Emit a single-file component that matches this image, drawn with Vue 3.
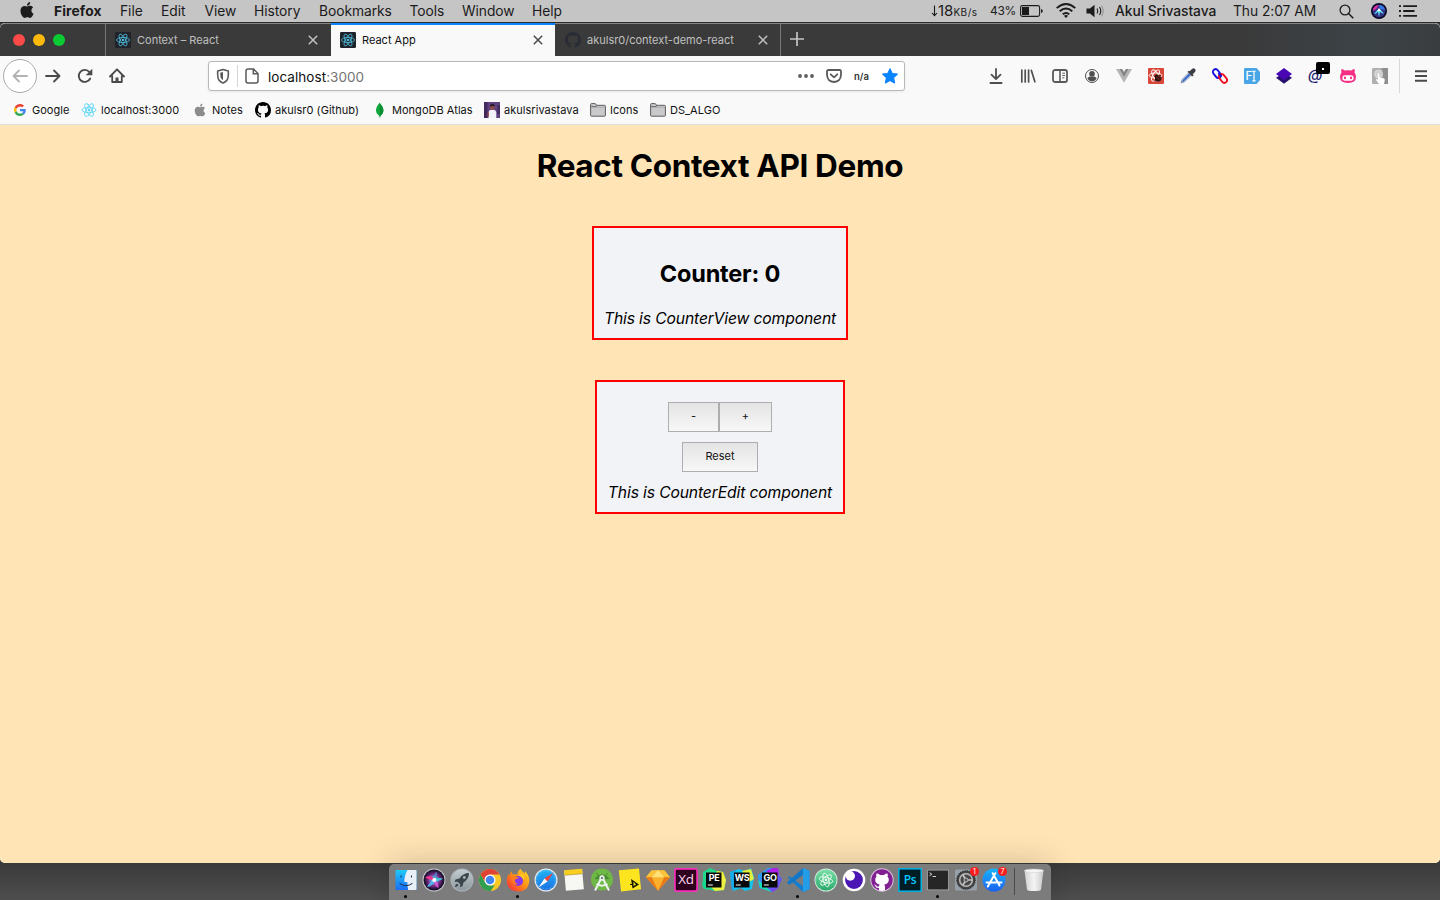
<script setup>
const menus = [
  { label: 'Firefox', width: 66 },
  { label: 'File', width: 41 },
  { label: 'Edit', width: 43.5 },
  { label: 'View', width: 49.5 },
  { label: 'History', width: 65 },
  { label: 'Bookmarks', width: 90.5 },
  { label: 'Tools', width: 52.5 },
  { label: 'Window', width: 70 },
  { label: 'Help', width: 40 }
]
const bookmarks = [
  { icon: 'google', label: 'Google', width: 37 },
  { icon: 'react-light', label: 'localhost:3000', width: 79 },
  { icon: 'apple-grey', label: 'Notes', width: 31 },
  { icon: 'github', label: 'akulsr0 (Github)', width: 85 },
  { icon: 'mongo', label: 'MongoDB Atlas', width: 80 },
  { icon: 'photo', label: 'akulsrivastava', width: 74 },
  { icon: 'folder', label: 'Icons', width: 28 },
  { icon: 'folder', label: 'DS_ALGO', width: 50 }
]
const tools = [
  { icon: 'download' }, { icon: 'library' }, { icon: 'sidebar' }, { icon: 'account' }, { icon: 'vue' },
  { icon: 'bee' }, { icon: 'dropper' }, { icon: 'link' }, { icon: 'font', glyph: 'F' }, { icon: 'layers' },
  { icon: 'at', glyph: '@', chip: true }, { icon: 'cat' }, { icon: 'touch' }
]
const dock = [
  { icon: 'finder', open: true }, { icon: 'siri' }, { icon: 'rocket' }, { icon: 'chrome' },
  { icon: 'firefox', open: true }, { icon: 'safari' }, { icon: 'notes' }, { icon: 'studio' },
  { icon: 'sticky' }, { icon: 'sketch' }, { icon: 'xd', glyph: 'Xd' }, { icon: 'pycharm', glyph: 'PE' },
  { icon: 'webstorm', glyph: 'WS' }, { icon: 'goland', glyph: 'GO' }, { icon: 'vscode', open: true },
  { icon: 'atom' }, { icon: 'insomnia' }, { icon: 'ghdesk' }, { icon: 'ps', glyph: 'Ps' },
  { icon: 'terminal', open: true }, { icon: 'prefs', badge: '1' }, { icon: 'appstore', badge: '7' }
]
</script>

<template>
  <svg class="defs" width="0" height="0">
    <defs>
      <linearGradient id="gFinder" x2="0" y2="1"><stop stop-color="#1fc8fb" /><stop offset="1" stop-color="#1b6ef3" /></linearGradient>
      <radialGradient id="gSiri"><stop stop-color="#fff" /><stop offset=".25" stop-color="#57b8e8" /><stop offset=".6" stop-color="#7a2a86" /><stop offset="1" stop-color="#15102c" /></radialGradient>
      <linearGradient id="gSilver" x2="0" y2="1"><stop stop-color="#c3cdd1" /><stop offset="1" stop-color="#8b979c" /></linearGradient>
      <linearGradient id="gFox" x1="1" x2="0" y2="1"><stop stop-color="#ffe226" /><stop offset=".5" stop-color="#ff8a16" /><stop offset="1" stop-color="#f5203f" /></linearGradient>
      <linearGradient id="gSafari" x2="0" y2="1"><stop stop-color="#1fb5f8" /><stop offset="1" stop-color="#1a6fe0" /></linearGradient>
      <linearGradient id="gAtom" x2="0" y2="1"><stop stop-color="#7ce0a8" /><stop offset="1" stop-color="#2aa96c" /></linearGradient>
      <linearGradient id="gStore" x2="0" y2="1"><stop stop-color="#19b4fb" /><stop offset="1" stop-color="#1b62f0" /></linearGradient>
      <linearGradient id="gTrash" x2="1"><stop stop-color="#d2d2d2" /><stop offset=".5" stop-color="#f4f4f4" /><stop offset="1" stop-color="#cacaca" /></linearGradient>
      <linearGradient id="gGo" x2="1" y2="1"><stop stop-color="#12b8f5" /><stop offset="1" stop-color="#8b2cf5" /></linearGradient>
    </defs>

    <symbol id="apple" viewBox="0 0 24 24"><path d="M12.152 6.896c-.948 0-2.415-1.078-3.96-1.04-2.04.027-3.91 1.183-4.961 3.014-2.117 3.675-.546 9.103 1.519 12.09 1.013 1.454 2.208 3.09 3.792 3.039 1.52-.065 2.09-.987 3.935-.987 1.831 0 2.35.987 3.96.948 1.637-.026 2.676-1.48 3.676-2.948 1.156-1.688 1.636-3.325 1.662-3.415-.039-.013-3.182-1.221-3.22-4.857-.026-3.04 2.48-4.494 2.597-4.559-1.429-2.09-3.623-2.324-4.39-2.376-2-.156-3.675 1.09-4.61 1.09zM15.53 3.83c.843-1.012 1.4-2.427 1.245-3.83-1.207.052-2.662.805-3.532 1.818-.78.896-1.454 2.338-1.273 3.714 1.338.104 2.715-.688 3.559-1.701" /></symbol>
    <symbol id="apple-grey" viewBox="0 0 16 16"><use href="#apple" x="1.5" y="1.5" width="13" height="13" fill="#8c8c8c" /></symbol>
    <symbol id="github" viewBox="0 0 16 16"><path d="M8 0C3.58 0 0 3.58 0 8c0 3.54 2.29 6.53 5.47 7.59.4.07.55-.17.55-.38 0-.19-.01-.82-.01-1.49-2.01.37-2.53-.49-2.69-.94-.09-.23-.48-.94-.82-1.13-.28-.15-.68-.52-.01-.53.63-.01 1.08.58 1.23.82.72 1.21 1.87.87 2.33.66.07-.52.28-.87.51-1.07-1.78-.2-3.64-.89-3.64-3.95 0-.87.31-1.59.82-2.15-.08-.2-.36-1.02.08-2.12 0 0 .67-.21 2.2.82.64-.18 1.32-.27 2-.27.68 0 1.36.09 2 .27 1.53-1.04 2.2-.82 2.2-.82.44 1.1.16 1.92.08 2.12.51.56.82 1.27.82 2.15 0 3.07-1.87 3.75-3.65 3.95.29.25.54.73.54 1.48 0 1.07-.01 1.93-.01 2.2 0 .21.15.46.55.38A8.013 8.013 0 0016 8c0-4.42-3.58-8-8-8z" /></symbol>
    <symbol id="atomic" viewBox="0 0 16 16"><g fill="none" stroke="currentColor" stroke-width=".9"><ellipse cx="8" cy="8" rx="7" ry="2.7" /><ellipse cx="8" cy="8" rx="7" ry="2.7" transform="rotate(60 8 8)" /><ellipse cx="8" cy="8" rx="7" ry="2.7" transform="rotate(120 8 8)" /></g><circle cx="8" cy="8" r="1.4" fill="currentColor" /></symbol>
    <symbol id="react-dark" viewBox="0 0 16 16"><rect width="16" height="16" rx="1.2" fill="#20232a" /><use href="#atomic" x=".5" y=".5" width="15" height="15" color="#4fb9d6" /></symbol>
    <symbol id="react-light" viewBox="0 0 16 16"><use href="#atomic" width="16" height="16" color="#61d9f5" /></symbol>
    <symbol id="google" viewBox="0 0 16 16"><g transform="translate(2 2) scale(.25)"><path fill="#ea4335" d="M24 9.5c3.54 0 6.71 1.22 9.21 3.6l6.85-6.85C35.9 2.38 30.47 0 24 0 14.62 0 6.51 5.38 2.56 13.22l7.98 6.19C12.43 13.72 17.74 9.5 24 9.5z" /><path fill="#4285f4" d="M46.98 24.55c0-1.57-.15-3.09-.38-4.55H24v9.02h12.94c-.58 2.96-2.26 5.48-4.78 7.18l7.73 6c4.51-4.18 7.09-10.36 7.09-17.65z" /><path fill="#fbbc05" d="M10.53 28.59c-.48-1.45-.76-2.99-.76-4.59s.27-3.14.76-4.59l-7.98-6.19C.92 16.46 0 20.12 0 24c0 3.88.92 7.54 2.56 10.78l7.97-6.19z" /><path fill="#34a853" d="M24 48c6.48 0 11.93-2.13 15.89-5.81l-7.73-6c-2.15 1.45-4.92 2.3-8.16 2.3-6.26 0-11.57-4.22-13.47-9.91l-7.98 6.19C6.51 42.62 14.62 48 24 48z" /></g></symbol>
    <symbol id="mongo" viewBox="0 0 16 16"><path d="M7.6.8C4.900 4 3.900 6 4 8.600c.1 2.400 1.600 4.200 3.300 5.200l.3 1.700h.5l.3-1.700c1.800-1.200 3-3 3-5.500C11.400 5.600 9.600 3.500 7.600.8z" fill="#12a83c" /><path d="M7.700 1v14.400h.4l.3-1.700c1.800-1.200 3-3 3-5.500C11.400 5.600 9.600 3.500 7.700 1z" fill="#0c8f33" /></symbol>
    <symbol id="photo" viewBox="0 0 16 16"><rect width="16" height="16" fill="#5d427f" /><path d="M0 0h3.500v16H0zM13.500 3H16v9h-2.500z" fill="#422a5c" /><path d="M4.500 16V10.500q.3-2.500 2.500-2.700h2.500q2.500.2 2.800 2.700V16z" fill="#f2f2f7" /><circle cx="8.200" cy="5.200" r="2.500" fill="#8b4a4c" /><path d="M5.700 4.500Q6 1.700 8.500 1.900q2.400.2 2.100 2.600-1.200-1.200-4.900 0z" fill="#251522" /><path d="M3.500 11l1.500-1v4l-1.500 1z" fill="#9a5148" /></symbol>
    <symbol id="folder" viewBox="0 0 16 16"><path d="M.6 13.300V2.600q0-1 .8-1h3.500q.8 0 1.200 1l.3.700h8.100q.9 0 .9.900v9.100q0 .9-.9.900H1.500q-.9 0-.9-.9z" fill="#c9c9cb" stroke="#5c5c5e" stroke-width="1" /><path d="M1.200 4.600h5l.7-1.200" stroke="#5c5c5e" fill="none" stroke-width=".9" /><path d="M1.200 5.200h13.600" stroke="#9a9a9c" stroke-width=".6" /></symbol>

    <symbol id="download" viewBox="0 0 16 16"><path d="M8 1v10M3.500 6.700 8 11.200l4.500-4.500M2.400 15h11.200" fill="none" stroke="#4f4f50" stroke-width="1.800" stroke-linecap="round" stroke-linejoin="round" /></symbol>
    <symbol id="library" viewBox="0 0 16 16"><path d="M1.800 2v12M5.200 2v12M8.600 2v12M11.300 2.300l3.600 11.500" fill="none" stroke="#4f4f50" stroke-width="1.700" stroke-linecap="round" /></symbol>
    <symbol id="sidebar" viewBox="0 0 16 16"><rect x="1" y="2" width="14" height="12" rx="2" fill="none" stroke="#5a5a5b" stroke-width="1.800" /><path d="M8 2v12" stroke="#5a5a5b" stroke-width="1.600" /><path d="M10.300 5.200h2.700M10.300 7.500h2.700M10.300 9.800h2" stroke="#5a5a5b" /></symbol>
    <symbol id="account" viewBox="0 0 16 16"><circle cx="8" cy="8" r="6.500" fill="none" stroke="#4f4f50" stroke-width="1" /><circle cx="8" cy="5.900" r="2.800" fill="#4f4f50" /><path d="M3.300 10.200Q5 8.200 6 8.500q2 1.200 4 0 1.200-.1 2.700 1.700-1.500 3.100-4.700 3.100t-4.700-3.100z" fill="#4f4f50" /></symbol>
    <symbol id="vue" viewBox="0 0 16 16"><path d="M0 1h3.300L8 9l4.700-8H16L8 14.700z" fill="#b5b5b5" /><path d="M3.300 1h2.900L8 4l1.800-3h2.900L8 9.200z" fill="#858585" /></symbol>
    <symbol id="bee" viewBox="0 0 16 16"><rect width="16" height="16" rx="1" fill="#d8483a" /><g fill="none" stroke="#fff" stroke-width=".9"><ellipse cx="7.500" cy="7.500" rx="6.300" ry="2.600" /><ellipse cx="7.500" cy="7.500" rx="6.300" ry="2.600" transform="rotate(60 7.500 7.500)" /><ellipse cx="7.500" cy="7.500" rx="6.300" ry="2.600" transform="rotate(120 7.500 7.500)" /></g><path d="M6.500 7.500l2.500-1.300 2 1.300 1.800-.8-.3 2 1.300 1-1 2.900-3 1.500-1.800-1.400-1.700.3.800-2.400z" fill="#2b1210" /><path d="M8.500 9l3 3M10 7.500l3 3" stroke="#b5402d" stroke-width=".7" /></symbol>
    <symbol id="dropper" viewBox="0 0 16 16"><path d="M1.200 14.800l.8-3L9 4.500 11.500 7l-7.300 7z" fill="#3f6fd2" stroke="#b4bccc" stroke-width="1.100" /><path d="M.7 15.300l1.100-3.300 2.300 2.200z" fill="#8797a8" /><path d="M7.500 3.800l4.700 4.700 1.500-1.200-1-1 2.300-2.200Q16.300 2 14.800.8 13.300-.2 12 1.100L9.700 3.300l-.7-.6z" fill="#3b3f45" /></symbol>
    <symbol id="link" viewBox="0 0 16 16"><g fill="none" stroke-width="1.900"><rect x="2.200" y=".8" width="5.400" height="9.600" rx="2.700" transform="rotate(-38 4.900 5.600)" stroke="#1611dd" /><rect x="8.300" y="5.600" width="5.400" height="9.600" rx="2.700" transform="rotate(-38 11 10.400)" stroke="#ee1020" /><path d="M6.500 5.200l2.300 3" stroke="#1611dd" /></g></symbol>
    <symbol id="font" viewBox="0 0 16 16"><path d="M1 0h11.500L16 4v8l-3.500 4H1q-1 0-1-1V1q0-1 1-1z" fill="#48a6e6" /><path d="M8.300 3q1.700 0 1.700 1v8q0 1-1.700 1M11.700 3Q10 3 10 4m0 8q0 1 1.700 1" fill="none" stroke="#fff" stroke-width="1.200" /></symbol>
    <symbol id="layers" viewBox="0 0 16 16"><path d="M0 9.700L8 5l8 4.700-8 6.100z" fill="#29106e" /><path d="M0 6L8 0l8 6-8 6z" fill="#4b06b4" /></symbol>
    <symbol id="cat" viewBox="0 0 16 16"><path d="M1.500 1q1.800-.1 3.200 1.500Q8 1.800 11.300 2.500 12.700.9 14.500 1q.6 2-.1 3.600 1.300 1 1.500 3.800.7 6.500-7.900 6.500T.1 8.400q.2-2.800 1.500-3.800Q.9 3 1.500 1z" fill="#f52d84" /><rect x="2.300" y="7.300" width="11.400" height="5.500" rx="2.700" fill="#fff" /><rect x="4" y="8.500" width="2" height="2.700" rx="1" fill="#f52d84" /><rect x="10" y="8.500" width="2" height="2.700" rx="1" fill="#f52d84" /></symbol>
    <symbol id="touch" viewBox="0 0 16 16"><path d="M1 0h14q1 0 1 1v15H1q-1 0-1-1V1q0-1 1-1z" fill="#b0b0b0" /><path d="M10 0h5q1 0 1 1v15h-4z" fill="#8e8e8e" /><circle cx="6.500" cy="6" r="3.900" fill="#cecece" stroke="#dcdcdc" /><path d="M5.600 5.500q.8-1 1.500 0l.5 4 4.500 1q1 .4.700 1.800L12 16H7l-3-4q-.1-1.200 1-.8l1 .7z" fill="#fff" /></symbol>
    <symbol id="close" viewBox="0 0 10 10"><path d="M.8.8l8.400 8.400M9.200.8L.8 9.200" stroke="currentColor" stroke-width="1.500" /></symbol>

    <symbol id="finder" viewBox="0 0 24 24"><rect x="1.500" y="2" width="21" height="20" rx=".8" fill="url(#gFinder)" /><path d="M13.500 2h8.200q.8 0 .8.800v18.400q0 .8-.8.800h-7.500q-.9-4-.9-8h-3Q10.500 7 13.500 2z" fill="#e9eff6" /><path d="M7 7.500v2M17.500 7.500v2M5.500 15.300q6.500 4.700 13 0" fill="none" stroke="#182b45" stroke-width="1" /></symbol>
    <symbol id="siri" viewBox="0 0 24 24"><circle cx="12" cy="12" r="11.500" fill="#c9c4cc" /><circle cx="12" cy="12" r="10.500" fill="#17122b" /><circle cx="12" cy="12" r="9.800" fill="url(#gSiri)" /><path d="M3 9.500Q9 5.500 13 12q-5 .5-10-2.500z" fill="#f1358a" /><path d="M12 12q3.500-3 9-1.500Q17 14.500 12 12z" fill="#38d6e0" opacity=".9" /><path d="M12.500 12q-1.500 7-7.500 7Q7 14 12.500 12z" fill="#5ab8f5" opacity=".9" /><path d="M12 12q5 2 4.500 8-4.500-2-4.500-8z" fill="#e05bd8" opacity=".9" /><path d="M12 12q-1-5 2.500-8.500 2 4.500-2.500 8.500z" fill="#4f9ad8" opacity=".7" /><circle cx="12.300" cy="12" r="2" fill="#fff" /></symbol>
    <symbol id="rocket" viewBox="0 0 24 24"><circle cx="12" cy="12" r="11.500" fill="#aab5b9" /><circle cx="12" cy="12" r="10.500" fill="url(#gSilver)" /><path d="M19 5q-6 0-9.500 5.500l-4 1L4.700 14l3-.2 2.500 2.500-.2 3 2.500-1 1-3.900Q19 11 19 5zM7 15.500q-2 1-2 3.500 2.400 0 3.500-2z" fill="#3b454c" /><circle cx="14.300" cy="9.500" r="1.400" fill="#aab5b9" /></symbol>
    <symbol id="chrome" viewBox="0 0 24 24"><circle cx="12" cy="12" r="11" fill="#fbc926" /><path d="M2.500 6.500A11 11 0 0 1 21.500 6.500H12L7.500 14.500z" fill="#df4335" /><path d="M2.500 6.500L7.300 14.800 12 17.500h4.700L12.500 23A11 11 0 0 1 2.500 6.500z" fill="#2f9e50" /><circle cx="12" cy="12" r="5.500" fill="#fff" /><circle cx="12" cy="12" r="4.300" fill="#4285ee" /></symbol>
    <symbol id="firefox" viewBox="0 0 24 24"><path d="M14.500.8q1.500 3 4 4.500.6-.6.300-2.300 4.500 4 4.500 9.500Q22.700 23.500 12 23.500.9 23.100.8 12.500.8 8.500 3 5.500l.3 2L5.500 3l1 3.400q3-.8 5 .4Q11.500 3 14.500.8z" fill="url(#gFox)" /><circle cx="12" cy="13" r="5" fill="#8538ec" /><path d="M5 9q3.500-1.500 6.500 0l1.500 1-4 1.500q-.8 3.500 3 4.500Q8 18 6 14z" fill="#ff7a20" /><path d="M12 7.500q4.500 0 5.500 4.500 1.600-4-1.500-6z" fill="#ffd12b" /></symbol>
    <symbol id="safari" viewBox="0 0 24 24"><circle cx="12" cy="12" r="11.500" fill="#e3e9ee" /><circle cx="12" cy="12" r="10.300" fill="url(#gSafari)" /><circle cx="12" cy="12" r="9.100" fill="none" stroke="#9ed5fa" stroke-width="1.200" stroke-dasharray=".5 1" opacity=".6" /><path d="M19.500 4.500l-6 9L10.500 10.500z" fill="#f44336" /><path d="M4.500 19.500l9-6-3-3z" fill="#fff" /></symbol>
    <symbol id="notes" viewBox="0 0 24 24"><g transform="rotate(-5 12 12)"><path d="M3 2h18v20H3z" fill="#f7f7f4" /><path d="M3 1.500h18v5H3z" fill="#f9cf1f" /><path d="M3 6.500h18" stroke="#a98d2a" stroke-width=".6" /></g></symbol>
    <symbol id="studio" viewBox="0 0 24 24"><circle cx="12" cy="11.500" r="11" fill="#6fb846" /><path d="M6.500 5.200l2 2.800M17.500 5.200l-2 2.800M5 10.700Q12 3 19 10.700z" fill="#478b34" stroke="#478b34" /><path d="M5 22.500L12 9l7 13.500M6.500 16q5.500 3.300 11 0" fill="none" stroke="#edf4f0" stroke-width="2" /><circle cx="12" cy="10" r="2.700" fill="#eaf2ec" /><circle cx="12" cy="10" r="1.100" fill="#5b665e" /></symbol>
    <symbol id="sticky" viewBox="0 0 24 24"><path d="M.8 2.300L21 .5l2 20.800-20 2.200z" fill="#fce51e" /><path d="M13 11l8 5.500-6.500 4z" fill="#171600" /><path d="M15.500 13.800v4.200l2.500-1.600z" fill="#eadc25" /><path d="M12 16.500h3" stroke="#171600" /></symbol>
    <symbol id="sketch" viewBox="0 0 24 24"><path d="M5.500 2.500h13L24 9.200 12 22.800 0 9.200z" fill="#fda72b" /><path d="M5.500 2.500L12 2l6.500.5L24 9.200H0z" fill="#fdc33a" /><path d="M12 2l6.200 7.200L12 22.800 5.800 9.200z" fill="#fbb12c" /><path d="M12 2l6.200 7.200H5.800z" fill="#ffe07a" /><path d="M0 9.200h5.800L12 22.800zM24 9.200h-5.800L12 22.800z" fill="#e97a19" /></symbol>
    <symbol id="xd" viewBox="0 0 24 24"><rect x=".9" y=".9" width="22.200" height="22.200" rx="2" fill="#2e001e" stroke="#fa2fbd" stroke-width="1.700" /></symbol>
    <symbol id="pycharm" viewBox="0 0 24 24"><path d="M1 4L8 0l7 3 6 1 3 8-2 10-9 1L1 20z" fill="#21d789" /><path d="M15 3l6 1 3 8-2 10-9 1-5-5z" fill="#f0f042" /><path d="M0 14l5-2v10l-4-2z" fill="#15d98f" /><rect x="4" y="4.500" width="15.500" height="15" fill="#080808" /><path d="M5.800 17h5" stroke="#fff" /></symbol>
    <symbol id="webstorm" viewBox="0 0 24 24"><path d="M0 4l9-3 6 2 6-3 3 9-2 12-7 2-4-3-8 3-2-8z" fill="#13c5ed" /><path d="M12 3l9-2 3 10-5 3z" fill="#e1f23c" /><path d="M0 4l6-2-2 20H2z" fill="#18a9e7" /><rect x="4" y="4.500" width="15.500" height="15" fill="#080808" /><path d="M5.800 17h5" stroke="#fff" /></symbol>
    <symbol id="goland" viewBox="0 0 24 24"><path d="M0 7l10-7h10l1 7 3 4-4 9-5 4-14-4z" fill="url(#gGo)" /><path d="M8 3l7-3h5l1 7-5 2z" fill="#ae20e5" /><path d="M0 12l6 5 8 7-12-4z" fill="#16dfb3" /><rect x="4" y="4.500" width="15.500" height="15" fill="#080808" /><path d="M5.800 17h5" stroke="#fff" /></symbol>
    <symbol id="vscode" viewBox="0 0 24 24"><path d="M17 0l6.500 3v18L17 24 2 10l1.500-2L17 18V6L3.500 16.500 1 14.500z" fill="#187dcc" /><path d="M17 0l6.500 3v18L17 24z" fill="#249de9" /><path d="M1 14.500L17 1v6L3.500 16.500z" fill="#1277c6" /></symbol>
    <symbol id="atom" viewBox="0 0 24 24"><circle cx="12" cy="12" r="11.500" fill="#d5eadd" /><circle cx="12" cy="12" r="10.600" fill="url(#gAtom)" /><use href="#atomic" x="4" y="4" width="16" height="16" color="#effff4" transform="rotate(15 12 12)" /></symbol>
    <symbol id="insomnia" viewBox="0 0 24 24"><circle cx="12" cy="12" r="11.300" fill="#fff" /><circle cx="12" cy="12" r="8.900" fill="#4a17b4" /><circle cx="8.300" cy="8" r="4.700" fill="#fff" /></symbol>
    <symbol id="ghdesk" viewBox="0 0 24 24"><circle cx="12" cy="12" r="11.700" fill="#ddbfe0" /><circle cx="12" cy="12" r="10.700" fill="#812091" /><path d="M6.500 5.500q2 0 3.500 1.400h4q1.500-1.400 3.500-1.400.6 2 .1 3.200Q19 10 18.800 12q-.2 3.700-4.500 4.500.7 1 .7 2.500v3.600q-3 .8-6 0V20q-3 .5-4-2.500l-1-1q1.800-.2 3 1.800 1 .8 2-.1 0-1.200.7-1.700-4.300-.8-4.500-4.500-.2-2 1.200-3.300-.5-1.200.1-3.200z" fill="#fff" /></symbol>
    <symbol id="ps" viewBox="0 0 24 24"><rect x=".8" y=".8" width="22.400" height="22.400" fill="#001d26" stroke="#00b5e7" stroke-width="1.500" /></symbol>
    <symbol id="terminal" viewBox="0 0 24 24"><rect x="1" y="1.800" width="22" height="20.400" rx="1.500" fill="#b1b1b1" /><rect x="1.800" y="2.600" width="20.400" height="18.800" rx="1" fill="#262626" /><path d="M3.500 4.700l2.400 1.500-2.400 1.500M6.500 8.500h3.500" stroke="#e2e2e2" stroke-width=".9" fill="none" /></symbol>
    <symbol id="prefs" viewBox="0 0 24 24"><rect x="1" y="1.500" width="22" height="21" rx="1.500" fill="#97a0a8" /><circle cx="12" cy="12" r="9.300" fill="#474747" /><circle cx="12" cy="12" r="9" fill="none" stroke="#303030" stroke-width="1.500" stroke-dasharray="1 .8" /><circle cx="12" cy="12" r="6.300" fill="none" stroke="#bababa" stroke-width="1.500" /><path d="M12 12h6M12 12L8.800 6.700M12 12l-3.200 5.300" stroke="#c5c5c5" stroke-width="1.700" /><circle cx="12" cy="12" r="2" fill="#555" stroke="#bbb" /></symbol>
    <symbol id="appstore" viewBox="0 0 24 24"><circle cx="12" cy="12" r="11.500" fill="url(#gStore)" /><path d="M13.300 5.200L7 16.500M10.700 5.200L17.500 17.500M4.500 14.600h9.500M17 14.600h2.500M6.300 17.500l-.5 1" stroke="#fff" stroke-width="2" stroke-linecap="round" fill="none" /></symbol>
    <symbol id="trash" viewBox="0 0 24 24"><path d="M2.500 2.500l2.500 19q.2 1.500 7 1.500t7-1.500l2.500-19z" fill="url(#gTrash)" /><ellipse cx="12" cy="2.700" rx="9.600" ry="1.700" fill="#f7f7f7" stroke="#c8c8c8" stroke-width=".5" /></symbol>
  </svg>

  <div class="desktop">
    <header class="menubar">
      <svg class="apple"><use href="#apple" /></svg>
      <nav class="menus">
        <span v-for="m in menus" :key="m.label" :class="{ app: m.label === 'Firefox' }" :style="{ width: m.width + 'px' }">{{ m.label }}</span>
      </nav>
      <div class="status">
        <span class="net"><svg width="7" height="12" viewBox="0 0 7 12"><path d="M3.500.5v10M1 8l2.500 2.700L6 8" fill="none" stroke="#1b1b1b" stroke-width="1.100" /></svg><b>18</b><small>KB/s</small></span>
        <span class="pct">43%</span>
        <svg class="battery" viewBox="0 0 24 12"><rect x=".6" y=".6" width="19" height="10.800" rx="1.800" fill="none" stroke="#1b1b1b" stroke-width="1.100" /><rect x="2" y="2" width="7" height="8" fill="#1b1b1b" /><path d="M21 4q1.800.4 1.800 2T21 8z" fill="#1b1b1b" /></svg>
        <svg class="wifi" viewBox="0 0 20 15"><g fill="none" stroke="#1b1b1b" stroke-width="1.900"><path d="M.7 5.100q9.300-8 18.600 0M3.700 8.300q6.300-5.400 12.600 0M6.700 11.300q3.300-2.700 6.600 0" /></g><path d="M7.900 12.700q2.100-1.600 4.200 0L10 15z" fill="#1b1b1b" /></svg>
        <svg class="volume" viewBox="0 0 18 14"><path d="M.5 4.500H4L8.500.7v12.600L4 9.500H.5z" fill="#1b1b1b" /><path d="M11 4.500q1.600 2.500 0 5M13.500 3q2.500 4 0 8" stroke="#1b1b1b" stroke-width="1.100" fill="none" /><path d="M15.500 1.600q3.300 5.400 0 10.800" stroke="#8a8a8a" fill="none" /></svg>
        <span class="user">Akul Srivastava</span>
        <span class="clock">Thu 2:07 AM</span>
        <svg class="search" viewBox="0 0 15 15"><circle cx="6" cy="6" r="4.900" fill="none" stroke="#1b1b1b" stroke-width="1.300" /><path d="M9.500 9.500l4.800 4.800" stroke="#1b1b1b" stroke-width="1.500" /></svg>
        <svg class="assistant" viewBox="0 0 16 16"><circle cx="8" cy="8" r="8" fill="#0c0b26" /><circle cx="8" cy="8" r="6.300" fill="#353087" /><path d="M2 8Q2 2.500 8 2q-2 4-6 6z" fill="#e12fa0" /><path d="M8 2q5 0 6 5l-5-1z" fill="#3577e5" /><path d="M3 11q3-4 5-5 4 2 5 5-3-1-4-2l-1 5-1-5q-2 2-4 2z" fill="#56dcec" /><path d="M8 5l2 3h-4z" fill="#fff" /></svg>
        <svg class="list" viewBox="0 0 18 12"><path d="M0 1.100h2M0 6h2M0 10.900h2M4.200 1.100H18M4.200 6h11.300M4.200 10.900H18" stroke="#1b1b1b" stroke-width="1.900" /></svg>
      </div>
    </header>

    <section class="window">
      <div class="tabbar">
        <div class="lights"><i class="red"></i><i class="yellow"></i><i class="green"></i></div>
        <div class="tab first"><svg class="fav"><use href="#react-dark" /></svg><span>Context – React</span><svg class="x"><use href="#close" /></svg></div>
        <div class="tab active"><svg class="fav"><use href="#react-dark" /></svg><span>React App</span><svg class="x"><use href="#close" /></svg></div>
        <div class="tab last"><svg class="fav gh"><use href="#github" /></svg><span>akulsr0/context-demo-react</span><svg class="x"><use href="#close" /></svg></div>
        <svg class="plus" viewBox="0 0 14 14"><path d="M7 0v14M0 7h14" stroke="#c4c4c4" stroke-width="1.700" /></svg>
      </div>

      <div class="navbar">
        <div class="back"><svg width="16" height="16" viewBox="0 0 16 16"><path d="M15 8H1.500M7 2.500L1.500 8 7 13.500" fill="none" stroke="#b3b3b4" stroke-width="1.800" stroke-linecap="round" stroke-linejoin="round" /></svg></div>
        <svg class="nav" viewBox="0 0 16 16"><path d="M1 8h13.500M9 2.500L14.500 8 9 13.500" fill="none" stroke="#4a4a4b" stroke-width="1.800" stroke-linecap="round" stroke-linejoin="round" /></svg>
        <svg class="nav" viewBox="0 0 16 16"><path d="M13.200 10.500A6 6 0 1 1 12.400 4" fill="none" stroke="#4a4a4b" stroke-width="1.900" stroke-linecap="round" /><path d="M15.300.8v6.500H8.700z" fill="#4a4a4b" /></svg>
        <svg class="nav" viewBox="0 0 16 16"><path d="M1 8.500L8 1.300l7 7.200M3.200 8v6h9.600V8" fill="none" stroke="#4a4a4b" stroke-width="1.800" stroke-linecap="round" stroke-linejoin="round" /><path d="M6.500 14V9.500h3V14z" fill="#4a4a4b" /></svg>
        <div class="urlbar">
          <svg class="shield" viewBox="0 0 16 16"><path d="M8 1.600l5.300 1.500q.4 7.300-1.500 9.300Q10 14.300 8 15q-2-.7-3.800-2.600Q2.300 10.400 2.700 3.100z" fill="none" stroke="#5a5a5b" stroke-width="1.600" stroke-linejoin="round" /><path d="M8 4v8.300q-1.700-.8-2.400-3Q5.200 7.500 5.200 4.700z" fill="#5a5a5b" /></svg>
          <i class="bar"></i>
          <svg class="page" viewBox="0 0 16 16"><path d="M3.500 1h6L14 5.500V13q0 2-2 2H4q-2 0-2-2V3q0-2 2-2zM9.300 1.500v4.200h4.200" fill="none" stroke="#59595a" stroke-width="1.500" /></svg>
          <span class="url">localhost<em>:3000</em></span>
          <svg class="act" viewBox="0 0 16 16"><g fill="#5d5d5e"><circle cx="2" cy="8" r="1.900" /><circle cx="8" cy="8" r="1.900" /><circle cx="14" cy="8" r="1.900" /></g></svg>
          <svg class="act" viewBox="0 0 16 16"><path d="M2.500 2h11q1.500 0 1.500 1.500V7q-.5 6.500-7 7-6.500-.5-7-7V3.500Q1 2 2.500 2z" fill="none" stroke="#5a5a5b" stroke-width="1.800" /><path d="M4.700 6.300L8 9.300l3.300-3" fill="none" stroke="#5a5a5b" stroke-width="1.800" stroke-linecap="round" stroke-linejoin="round" /></svg>
          <span class="na">n/a</span>
          <svg class="act" viewBox="0 0 16 16"><path d="M8 .8l2.200 4.700 5.200.6-3.800 3.600 1 5.200L8 12.400l-4.600 2.500 1-5.200L.6 6.100l5.200-.6z" fill="#0a84ff" stroke="#0a84ff" stroke-width="1.100" stroke-linejoin="round" /></svg>
        </div>
        <div class="tools">
          <span v-for="t in tools" :key="t.icon" class="tool">
            <svg v-if="t.icon !== 'at'" width="16" height="16"><use :href="'#' + t.icon" /></svg>
            <span v-if="t.glyph" :class="['tool-glyph', 'glyph-' + t.icon]">{{ t.glyph }}</span>
            <b v-if="t.chip" class="chip"></b>
          </span>
        </div>
        <i class="rule"></i>
        <svg class="burger" viewBox="0 0 12 12"><path d="M0 1.200h12M0 6h12M0 10.800h12" stroke="#4a4a4b" stroke-width="1.900" /></svg>
      </div>

      <div class="bookmarks">
        <div v-for="b in bookmarks" :key="b.label" class="bookmark"><svg width="16" height="16"><use :href="'#' + b.icon" /></svg><span :style="{ width: b.width + 'px' }">{{ b.label }}</span></div>
      </div>

      <main class="page-body">
        <h1>React Context API Demo</h1>
        <div class="card view">
          <h2>Counter: 0</h2>
          <p>This is CounterView component</p>
        </div>
        <div class="card edit">
          <div class="pair"><button>-</button><button class="inc">+</button></div>
          <button class="reset">Reset</button>
          <p>This is CounterEdit component</p>
        </div>
      </main>
    </section>

    <footer class="dock">
      <div v-for="d in dock" :key="d.icon" class="app-icon">
        <svg width="24" height="24"><use :href="'#' + d.icon" /></svg>
        <span v-if="d.glyph" :class="['glyph', 'glyph-' + d.icon]">{{ d.glyph }}</span>
        <i v-if="d.open" class="dot"></i>
        <b v-if="d.badge" class="badge">{{ d.badge }}</b>
      </div>
      <i class="divider"></i>
      <div class="app-icon"><svg width="24" height="24"><use href="#trash" /></svg></div>
    </footer>
  </div>
</template>

<style>
body { background: #454545; overflow: hidden; }
</style>

<style scoped>
* { box-sizing: border-box; }
svg { display: block; flex: none; }
.defs { position: absolute; }
.desktop { position: relative; width: 1440px; height: 900px; overflow: hidden; display: flex; flex-direction: column; font-family: Inter, "Liberation Sans", sans-serif; background: linear-gradient(#3a3a3a 863px, #4e4e4e 900px); }
.menubar { height: 23px; flex: none; display: flex; align-items: center; background: #c5c5c5; border-bottom: 1px solid #2b2b2b; color: #1b1b1b; font-size: 13.8px; line-height: 22px; white-space: nowrap; }
.apple { width: 16px; height: 16px; margin: -2px 0 0 19px; fill: #1b1b1b; }
.menus { display: flex; margin-left: 19px; width: 877px; letter-spacing: -.05px; }
.menus span { flex: none; }
.menus .app { font-weight: 700; letter-spacing: .12px; }
.status { display: flex; align-items: center; }
.net { width: 59px; display: flex; align-items: center; }
.net b { font-weight: 400; font-size: 15px; }
.net small { font-size: 10px; padding-top: 2px; letter-spacing: .5px; }
.pct { width: 30px; font-size: 12px; letter-spacing: -.3px; }
.battery { width: 24px; height: 12px; margin-right: 12px; }
.wifi { width: 20px; height: 15px; margin-right: 10px; margin-top: -1px; }
.volume { width: 18px; height: 14px; margin-right: 11px; }
.user { width: 118px; font-weight: 500; letter-spacing: -.05px; }
.clock { width: 106px; letter-spacing: -.05px; }
.search { width: 15px; height: 15px; margin-right: 17px; }
.assistant { width: 16px; height: 16px; margin-right: 12px; }
.list { width: 18px; height: 12px; }

.window { height: 840px; flex: none; overflow: hidden; border-radius: 5px; background: #f9f9fa; display: flex; flex-direction: column; }
.tabbar { height: 33px; flex: none; display: flex; align-items: center; background: linear-gradient(90deg, #3a3a3a 86%, #3c4347 95%, #3a3d3f); border-top: 1px solid #858585; border-radius: 5px 5px 0 0; }
.lights { width: 105px; display: flex; gap: 8px; padding-left: 13px; }
.lights i { width: 12px; height: 12px; border-radius: 50%; }
.red { background: #fc4a48; }
.yellow { background: #fdb90b; }
.green { background: #0bcb33; }
.tab { height: 32px; display: flex; align-items: center; padding: 0 12px 0 9px; color: #c0c0c0; font-size: 11px; white-space: nowrap; }
.tab.first { width: 226px; padding-right: 13px; border-left: 1px solid #777; }
.tab.active { width: 224px; height: 33px; margin-top: -1px; padding-bottom: 2px; background: #f9f9fa; color: #111; border-top: 2px solid #0a84ff; }
.tab.last { width: 226px; padding-left: 10px; border-right: 1px solid #777; }
.fav { width: 16px; height: 16px; margin-right: 6px; }
.gh { fill: #292c35; }
.x { width: 10px; height: 10px; margin-left: auto; }
.active .x { color: #4a4a4b; }
.plus { width: 14px; height: 14px; margin: -2px 0 0 9px; }

.navbar { height: 40px; flex: none; display: flex; align-items: center; padding-left: 3px; background: #f9f9fa; }
.back { width: 34px; height: 34px; border: 1px solid #ababac; border-radius: 50%; background: #fff; display: grid; place-items: center; margin-right: 8px; }
.nav { width: 16px; height: 16px; margin-right: 16px; }
.urlbar { width: 697px; height: 30px; margin-left: 67px; display: flex; align-items: center; border: 1px solid #b9b9ba; border-radius: 3px; background: #fff; padding-left: 6px; box-shadow: 0 1px 3px #0001; }
.shield { width: 16px; height: 16px; }
.bar { width: 1px; height: 22px; background: #d5d5d6; margin: 0 6px; }
.page { width: 16px; height: 16px; }
.url { flex: none; margin-left: 8px; width: 530px; padding-top: 1px; font-size: 13.5px; letter-spacing: .05px; color: #111; }
.url em { font-style: normal; color: #737373; }
.act { width: 16px; height: 16px; margin-right: 12px; }
.urlbar .act:last-child { margin-right: 0; }
.na { flex: none; width: 16px; margin-right: 12px; font-size: 9.5px; font-weight: 600; color: #333; }
.tools { display: flex; margin-left: 75px; }
.tool { position: relative; width: 32px; height: 32px; display: grid; place-items: center; }
.tool-glyph { position: absolute; line-height: 16px; }
.glyph-font { left: 9.5px; top: 8px; font-size: 11.5px; font-weight: 500; color: #fff; }
.glyph-at { left: 8px; top: 7px; font-size: 14.5px; font-style: italic; font-weight: 500; color: #211c6b; }
.chip { position: absolute; left: 16px; top: 2px; width: 14px; height: 12px; background: #000; border-radius: 2px; }
.chip::after { content: ""; position: absolute; left: 6px; top: 6px; width: 2px; height: 2px; background: #fff; }
.rule { width: 1px; height: 34px; background: #d8d8d9; margin-left: 3px; }
.burger { width: 12px; height: 12px; margin-left: 15px; }

.bookmarks { height: 29px; flex: none; display: flex; align-items: center; gap: 12px; padding: 0 0 1px 12px; border-bottom: 1px solid #dcdde0; font-size: 11px; letter-spacing: .03px; color: #111; white-space: nowrap; }
.bookmark { display: flex; align-items: center; gap: 4px; }

.page-body { flex: 1; background: #ffe4b5; color: #000; display: flex; flex-direction: column; align-items: center; padding-top: 21px; }
h1 { margin: 0 0 40px; font-size: 31.5px; line-height: 40px; font-weight: 700; letter-spacing: -.35px; }
.card { border: 2px solid #f00; background: #f2f3f7; display: flex; flex-direction: column; align-items: center; white-space: nowrap; }
.view { width: 256px; height: 114px; margin-bottom: 40px; padding-top: 30px; }
.edit { width: 250px; height: 134px; padding-top: 20px; }
h2 { margin: 0; font-size: 23.5px; line-height: 32px; font-weight: 700; letter-spacing: -.2px; }
p { margin: 0; font-size: 15.7px; font-style: italic; line-height: 20px; letter-spacing: -.14px; }
.view p { margin-top: 19px; }
.edit p { margin-top: 11px; }
.pair { display: flex; }
button { height: 30px; width: 51px; padding: 0 0 2px; border: 1px solid #aeaeae; background: linear-gradient(#e4e4e4, #f7f7f7); font: 11px Inter, sans-serif; color: #111; }
.inc { width: 53px; }
.reset { width: 76px; margin-top: 10px; }

.dock { position: absolute; left: 389px; top: 864px; width: 662px; height: 40px; display: flex; padding-left: 3px; background: #7c7c7c; border-radius: 5px 5px 0 0; box-shadow: 0 0 32px rgba(0, 0, 0, .2); }
.app-icon { position: relative; width: 28px; padding: 4px 2px; }
.glyph { position: absolute; left: 2px; top: 4px; width: 24px; text-align: center; color: #fff; font-size: 9px; font-weight: 700; line-height: 20px; letter-spacing: -.3px; }
.glyph-xd { font: 13.5px/23px "Open Sans", sans-serif; color: #ffd9f3; }
.glyph-ps { font: 600 12px/23px "Open Sans", sans-serif; color: #00c8ff; }
.dot { position: absolute; left: 12px; top: 31px; width: 3px; height: 3px; border-radius: 50%; background: #000; }
.badge { position: absolute; left: 18px; top: 3px; width: 9px; height: 9px; border-radius: 50%; background: #f91c1c; color: #fff; font-size: 7px; font-weight: 400; line-height: 9px; text-align: center; }
.divider { width: 1px; height: 27px; margin: 4px 5px 0 6px; background: #4a4a4a; }
</style>
